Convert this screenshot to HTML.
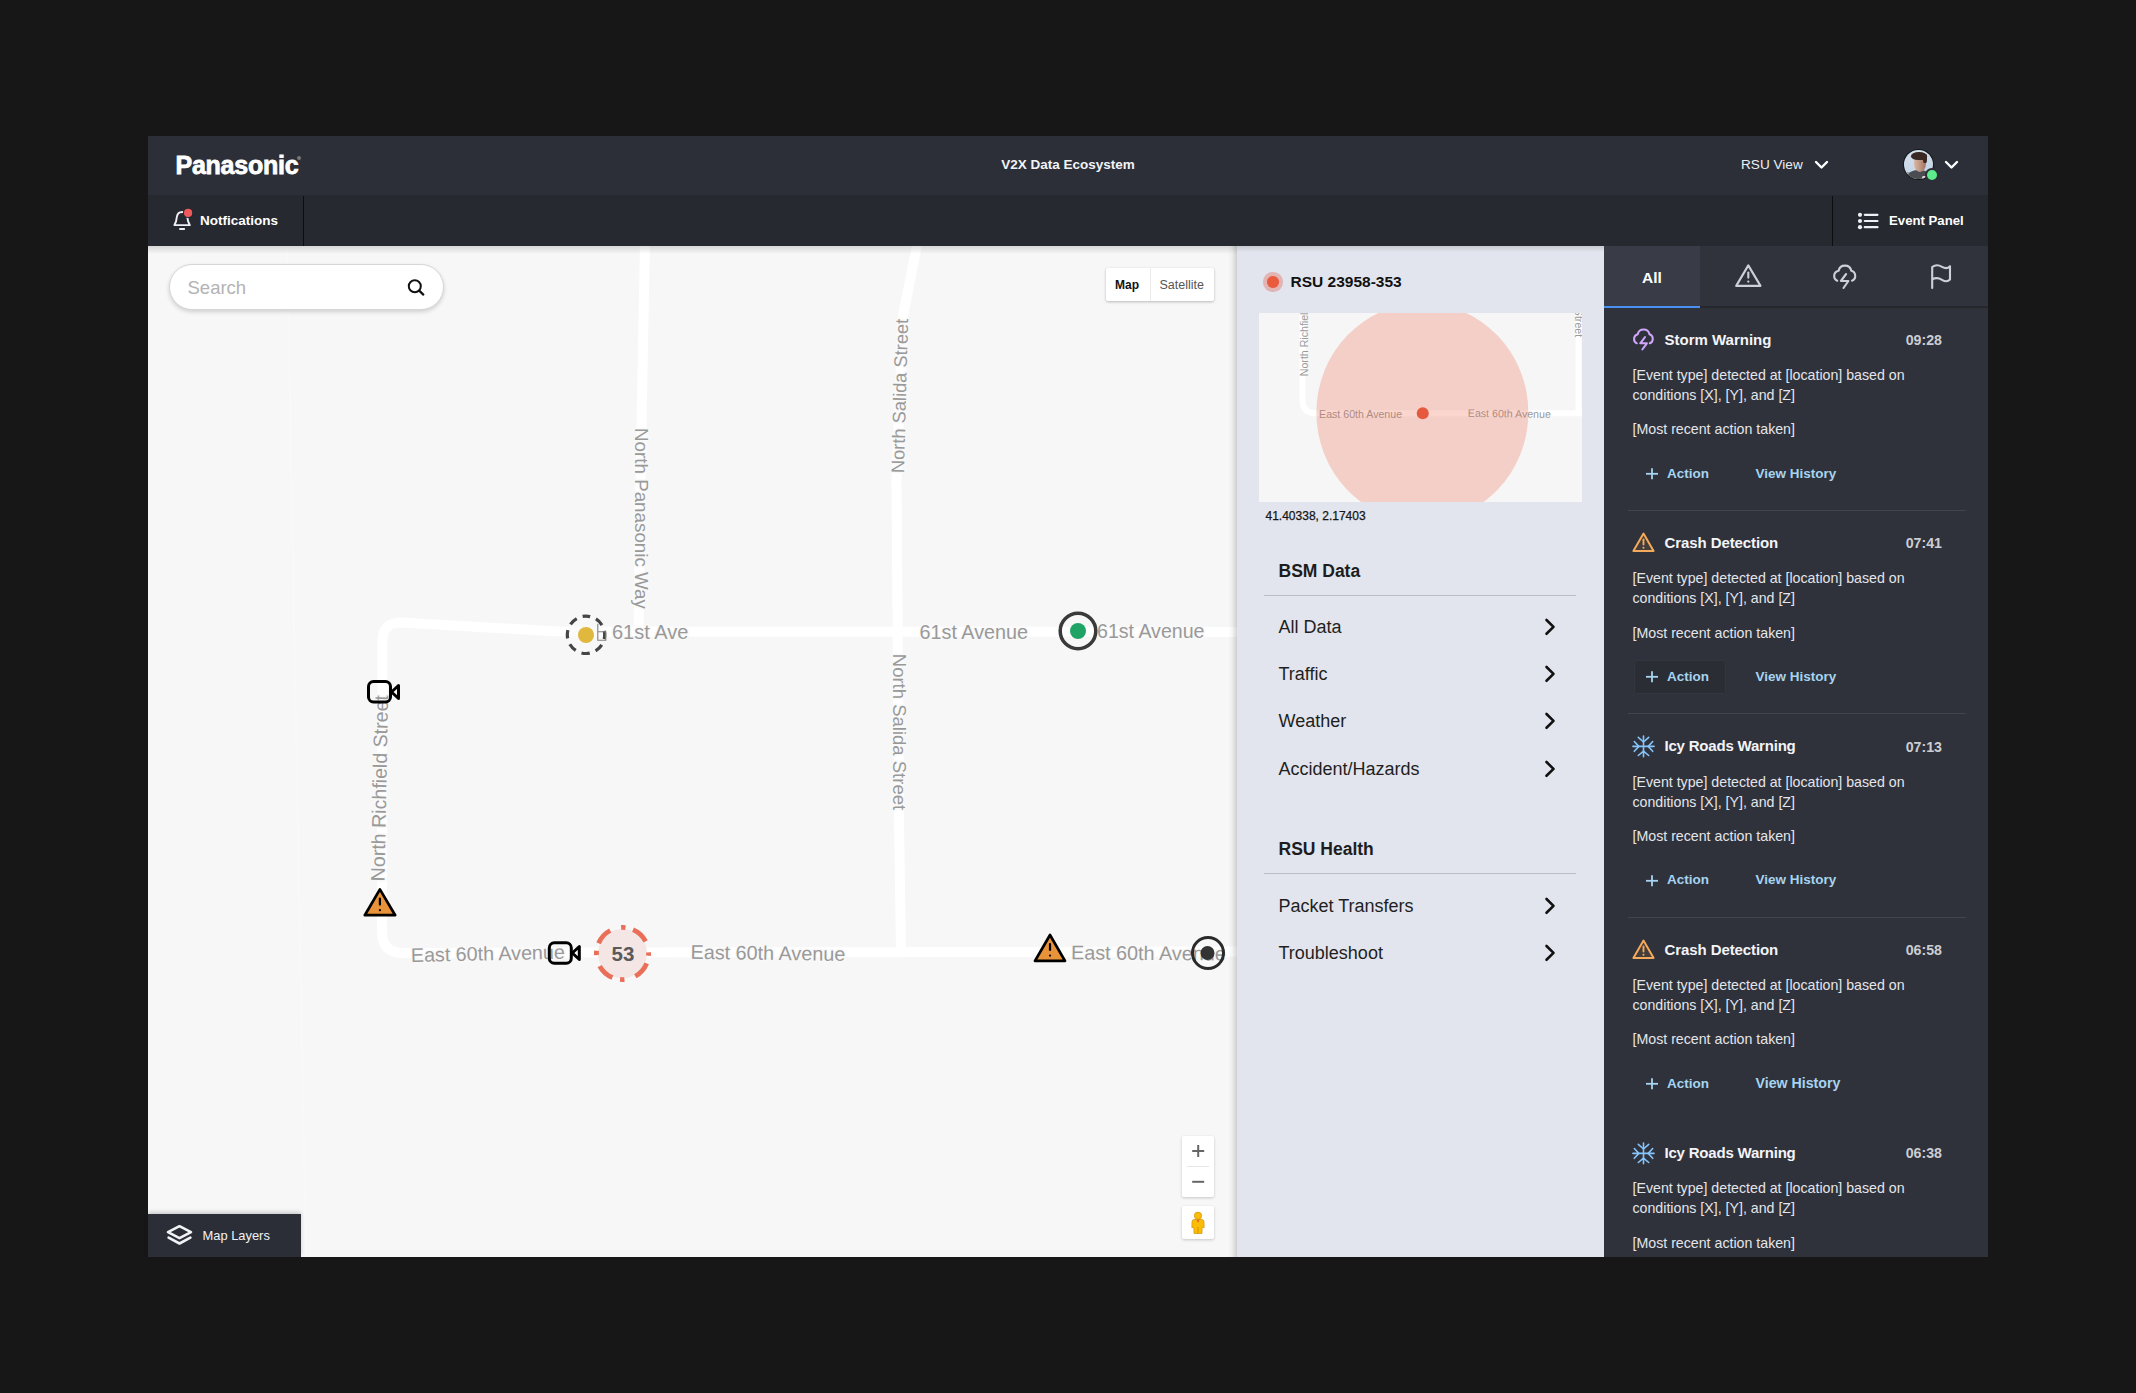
<!DOCTYPE html>
<html><head><meta charset="utf-8">
<style>
*{box-sizing:border-box}
html,body{margin:0;padding:0}
body{width:2136px;height:1393px;background:#171717;position:relative;overflow:hidden;font-family:"Liberation Sans",sans-serif}
.a{position:absolute}
.t{position:absolute;line-height:1;white-space:nowrap}
#h1{left:148px;top:136px;width:1840px;height:59px;background:#2c2f37}
#h2{left:148px;top:195px;width:1840px;height:51px;background:#262930}
#map{left:148px;top:246px;width:1089px;height:1011px;background:#f7f7f7;overflow:hidden}
#rsu{left:1237px;top:246px;width:367px;height:1011px;background:#e2e5ed}
#ev{left:1604px;top:246px;width:384px;height:1011px;background:#2f323b;overflow:hidden}
</style></head>
<body>
<div id="h1" class="a"></div>
<div id="h2" class="a"></div>
<!-- header 1 -->
<div class="t" style="left:175.5px;top:153px;font-size:25px;font-weight:bold;color:#fff;letter-spacing:-0.25px;-webkit-text-stroke:0.8px #fff">Panasonic</div>
<div class="a" style="left:297px;top:156px;width:4px;height:4px;border-radius:50%;background:#777"></div>
<div class="t" style="left:948px;width:240px;text-align:center;top:158px;font-size:13.5px;font-weight:bold;color:#f2f3f7">V2X Data Ecosystem</div>
<div class="t" style="left:1741px;top:157.8px;font-size:13.6px;color:#eceef2">RSU View</div>
<svg class="a" style="left:1812px;top:157px" width="18" height="14"><polyline points="4,5 9.5,10.5 15,5" fill="none" stroke="#fff" stroke-width="2.4" stroke-linecap="round" stroke-linejoin="round"/></svg>
<div class="a" style="left:1903.3px;top:149px;width:31.2px;height:31.2px;border-radius:50%;background:#15171a"></div>
<div class="a" style="left:1904.3px;top:150px;width:29.2px;height:29.2px;border-radius:50%;overflow:hidden;background:linear-gradient(160deg,#d6e2ee,#bfd0e2)">
  <div class="a" style="left:-3px;top:22px;width:15px;height:10px;border-radius:40% 40% 0 0;background:#9aa0a8"></div>
  <div class="a" style="left:4px;top:19.5px;width:22px;height:14px;border-radius:45% 45% 0 0;background:#4b4b52"></div>
  <div class="a" style="left:17.5px;top:25.5px;width:6px;height:3.5px;border-radius:2px;background:#e2dcd6"></div>
  <div class="a" style="left:9.5px;top:5px;width:12.5px;height:17px;border-radius:40% 40% 48% 48%;background:linear-gradient(90deg,#d9b8a4,#a47460)"></div>
  <div class="a" style="left:7px;top:1.5px;width:15.5px;height:8.5px;border-radius:50% 50% 30% 45%;background:#3a2922"></div>
  <div class="a" style="left:19px;top:4px;width:3.5px;height:9px;border-radius:40%;background:#3a2922"></div>
</div>
<div class="a" style="left:1925.2px;top:168.2px;width:13.7px;height:13.7px;border-radius:50%;background:#2c2f37"></div>
<div class="a" style="left:1926.7px;top:169.7px;width:10.7px;height:10.7px;border-radius:50%;background:#5ced8a"></div>
<svg class="a" style="left:1942px;top:157px" width="18" height="14"><polyline points="4,5 9.5,10.5 15,5" fill="none" stroke="#fff" stroke-width="2.4" stroke-linecap="round" stroke-linejoin="round"/></svg>
<!-- header 2 -->
<svg class="a" style="left:166px;top:203px" width="32" height="32" viewBox="0 0 32 32">
 <path d="M8.4,22.1 Q10.4,19.2 10.8,14.2 C11.2,10.9 13.3,9 16.2,9 C19,9 21,10.9 21.3,14.2 Q21.8,19.2 23.8,22.1 Z" fill="none" stroke="#eef0f5" stroke-width="1.9" stroke-linejoin="round"/>
 <line x1="14" y1="26" x2="18.2" y2="26" stroke="#eef0f5" stroke-width="1.9" stroke-linecap="round"/>
 <circle cx="22.1" cy="9.9" r="5.2" fill="#262930"/>
 <circle cx="22.1" cy="9.9" r="4.1" fill="#ee5a5a"/>
</svg>
<div class="t" style="left:200px;top:213.8px;font-size:13.5px;font-weight:bold;color:#fff">Notfications</div>
<div class="a" style="left:302.5px;top:196px;width:1.5px;height:50px;background:#0e0e10"></div>
<div class="a" style="left:1831.5px;top:196px;width:1.5px;height:50px;background:#0e0e10"></div>
<svg class="a" style="left:1856px;top:211px" width="24" height="20" viewBox="0 0 24 20">
 <circle cx="4" cy="3.8" r="2.1" fill="#eef0f4"/><circle cx="4" cy="10" r="2.1" fill="#eef0f4"/><circle cx="4" cy="16.2" r="2.1" fill="#eef0f4"/>
 <line x1="8.8" y1="3.8" x2="21.5" y2="3.8" stroke="#eef0f4" stroke-width="2.2" stroke-linecap="round"/>
 <line x1="8.8" y1="10" x2="21.5" y2="10" stroke="#eef0f4" stroke-width="2.2" stroke-linecap="round"/>
 <line x1="8.8" y1="16.2" x2="21.5" y2="16.2" stroke="#eef0f4" stroke-width="2.2" stroke-linecap="round"/>
</svg>
<div class="t" style="left:1889px;top:214.2px;font-size:13.2px;font-weight:bold;color:#fff">Event Panel</div>
<div id="map" class="a">
<svg class="a" style="left:0;top:0" width="1089" height="1011" viewBox="148 246 1089 1011">
 <line x1="287" y1="246" x2="306" y2="1257" stroke="#f9f9f9" stroke-width="1.6"/>
 <g fill="none" stroke="#ffffff" stroke-width="10" stroke-linejoin="round">
  <path d="M645,240 L641.6,420 L638.5,632"/>
  <path d="M918,240 L903,316 L896.5,480 L899,820 L901,952"/>
  <path d="M382.5,700 L382.5,641 Q382.5,622.5 401,622.5 L560,631.5 L1240,632"/>
  <path d="M382,700 L382,932 Q382,952.5 402,953 L1240,951.5"/>
 </g>
 <g font-family="Liberation Sans" fill="#999999" stroke="#f9f9f9" stroke-width="3" paint-order="stroke" stroke-linejoin="round">
  <text x="612" y="638.7" font-size="20">61st Ave</text>
  <text x="919.5" y="639" font-size="19.8">61st Avenue</text>
  <text x="1097" y="638.2" font-size="19.6">61st Avenue</text>
  <text transform="translate(411,962) rotate(-1.2)" font-size="19.7">East 60th Avenue</text>
  <text transform="translate(690.5,958.8) rotate(0.8)" font-size="19.8">East 60th Avenue</text>
  <text transform="translate(1071,959.3) rotate(0.5)" font-size="19.8">East 60th Avenue</text>
  <text transform="translate(635,428) rotate(90)" font-size="18.8">North Panasonic Way</text>
  <text transform="translate(904,473.3) rotate(-88.5)" font-size="18.3">North Salida Street</text>
  <text transform="translate(893,653.8) rotate(90)" font-size="18.5">North Salida Street</text>
  <text transform="translate(384.5,881.4) rotate(-88.9)" font-size="19.6">North Richfield Street</text>
 </g>
 <!-- yellow marker -->
 <circle cx="586" cy="634.8" r="18.7" fill="#f9f9f9" fill-opacity="0.6" stroke="#454545" stroke-width="3.2" stroke-dasharray="8.5 6.19" stroke-dashoffset="4.25" transform="rotate(-90 586 634.8)"/>
 <circle cx="586" cy="635" r="8" fill="#e0b83e"/>
 <path d="M597.8,623.8 L597.8,640.2 L605.8,640.2 L605.8,631.8 L597.8,631.8" fill="none" stroke="#808080" stroke-width="1.1"/>

 <!-- green marker -->
 <circle cx="1078" cy="631" r="17.8" fill="none" stroke="#3a3a3a" stroke-width="3.5"/>
 <circle cx="1078" cy="631" r="8" fill="#20a465"/>
 <!-- dark marker -->
 <circle cx="1208" cy="953" r="15.5" fill="none" stroke="#2a2a2a" stroke-width="3"/>
 <circle cx="1207.5" cy="953" r="7" fill="#333"/>
 <!-- 53 marker -->
 <circle cx="622.5" cy="953.5" r="24.5" fill="#f3e6e4"/>
 <circle cx="622.5" cy="953.5" r="26.1" fill="none" stroke="#ea6f58" stroke-width="4.8" stroke-dasharray="4.55 7.75 17.35 11.35" stroke-dashoffset="2.27"/>
 <text x="623" y="961.2" font-family="Liberation Sans" font-weight="bold" font-size="20.5" fill="#5a5a5a" text-anchor="middle">53</text>
 <!-- cameras -->
 <g fill="none" stroke="#000" stroke-width="3" stroke-linejoin="round">
  <rect x="368.5" y="681.5" width="22" height="20.4" rx="5"/>
  <path d="M391.5,692 L398.5,685.5 L398.5,698.5 Z"/>
  <rect x="549.3" y="942.8" width="22" height="20.4" rx="5"/>
  <path d="M572.3,953 L579.3,946.5 L579.3,959.5 Z"/>
 </g>
 <!-- warnings -->
 <g stroke="#000" stroke-width="2.7" stroke-linejoin="round">
  <path d="M379.9,889.4 L395.2,915.2 L364.8,915.2 Z" fill="#e8923a"/>
  <line x1="379.9" y1="898.6" x2="379.9" y2="904.6" stroke-width="2.2" stroke-linecap="round"/>
  <circle cx="379.9" cy="910.2" r="1.1" stroke-width="0" fill="#000"/>
  <path d="M1050,935 L1065,960.9 L1035,960.9 Z" fill="#e8923a"/>
  <line x1="1050" y1="944" x2="1050" y2="950" stroke-width="2.2" stroke-linecap="round"/>
  <circle cx="1050" cy="955.6" r="1.1" stroke-width="0" fill="#000"/>
 </g>
</svg>
<div class="a" style="left:0;top:0;width:1089px;height:8px;background:linear-gradient(rgba(0,0,0,0.13),rgba(0,0,0,0))"></div>
</div>

<!-- map controls -->
<div class="a" style="left:168.5px;top:264px;width:275px;height:45.5px;border-radius:23px;background:#fff;border:1px solid #d6d6d6;box-shadow:0 2px 4px rgba(0,0,0,0.16)"></div>
<div class="t" style="left:187.5px;top:279px;font-size:18.5px;color:#b3b3b3">Search</div>
<svg class="a" style="left:404px;top:276px" width="24" height="22" viewBox="0 0 24 22"><circle cx="10.8" cy="10.2" r="6" fill="none" stroke="#111" stroke-width="2"/><line x1="15.2" y1="14.6" x2="19.3" y2="18.6" stroke="#111" stroke-width="2.2" stroke-linecap="round"/></svg>
<div class="a" style="left:1106px;top:268px;width:108px;height:32.5px;border-radius:2px;background:#fff;box-shadow:0 1px 3px rgba(0,0,0,0.25)"></div>
<div class="a" style="left:1150px;top:268px;width:1px;height:32.5px;background:#ebebeb"></div>
<div class="t" style="left:1115px;top:278.5px;font-size:12px;font-weight:bold;color:#111">Map</div>
<div class="t" style="left:1159.5px;top:278.5px;font-size:12.5px;color:#565656">Satellite</div>
<div class="a" style="left:1182px;top:1136px;width:32px;height:61px;border-radius:2px;background:#fff;box-shadow:0 1px 3px rgba(0,0,0,0.2)"></div>
<div class="a" style="left:1187px;top:1166px;width:22px;height:1px;background:#e6e6e6"></div>
<svg class="a" style="left:1182px;top:1136px" width="32" height="61"><g stroke="#666" stroke-width="2"><line x1="10.2" y1="15" x2="22.2" y2="15"/><line x1="16.2" y1="9" x2="16.2" y2="21"/><line x1="10.2" y1="45.8" x2="22.2" y2="45.8"/></g></svg>
<div class="a" style="left:1182px;top:1206px;width:32px;height:32.5px;border-radius:2px;background:#fff;box-shadow:0 1px 3px rgba(0,0,0,0.2)"></div>
<svg class="a" style="left:1182px;top:1206px" width="32" height="33" viewBox="0 0 32 33">
 <circle cx="16" cy="9.8" r="3.7" fill="#fbbc05" stroke="#c88a00" stroke-width="0.6"/>
 <path d="M12,13.5 L20,13.5 Q21.8,13.5 22,15.5 L22.2,21.5 L20.2,21.5 L20,27.5 L12,27.5 L11.8,21.5 L9.8,21.5 L10,15.5 Q10.2,13.5 12,13.5 Z" fill="#fbbc05" stroke="#c88a00" stroke-width="0.6"/>
 <path d="M14.5,13.8 L16,17 L17.5,13.8 Z" fill="#e8642c"/>
 <line x1="16" y1="21" x2="16" y2="27.5" stroke="#c88a00" stroke-width="0.8"/>
</svg>
<div class="a" style="left:148px;top:1214px;width:153px;height:43px;background:#2b2e36;box-shadow:0 -2px 4px rgba(0,0,0,0.18)"></div>
<svg class="a" style="left:164px;top:1222px" width="32" height="27" viewBox="0 0 32 27">
 <path d="M15.5,4.2 L27,10.2 L15.5,16.2 L4,10.2 Z" fill="none" stroke="#f1f2f6" stroke-width="2.6" stroke-linejoin="round"/>
 <path d="M4.6,15.6 L15.5,21.5 L26.4,15.6" fill="none" stroke="#f1f2f6" stroke-width="2.6" stroke-linejoin="round" stroke-linecap="round"/>
</svg>
<div class="t" style="left:202.5px;top:1230px;font-size:12.9px;color:#f1f2f6">Map Layers</div>
<div id="rsu" class="a"></div>
<div class="a" style="left:1228px;top:246px;width:9px;height:1011px;background:linear-gradient(90deg,rgba(0,0,0,0),rgba(0,0,0,0.04) 45%,rgba(0,0,0,0.17))"></div>
<div class="a" style="left:1237px;top:246px;width:367px;height:6px;background:linear-gradient(rgba(0,0,0,0.12),rgba(0,0,0,0))"></div>
<div class="a" style="left:1263px;top:272px;width:19.5px;height:19.5px;border-radius:50%;background:rgba(226,120,110,0.45)"></div>
<div class="a" style="left:1267px;top:276px;width:11.5px;height:11.5px;border-radius:50%;background:#ea5a3d"></div>
<div class="t" style="left:1290.5px;top:274px;font-size:15.5px;font-weight:bold;color:#111">RSU 23958-353</div>
<div class="a" style="left:1258.5px;top:313px;width:323.5px;height:188.5px;background:#f6f6f6;overflow:hidden">
 <svg class="a" style="left:0;top:0" width="324" height="189" viewBox="1258.5 313 323.5 188.5">
  <g fill="none" stroke="#fff" stroke-width="6" stroke-linejoin="round">
   <path d="M1302,300 L1302,400 Q1302,413 1315,413 L1590,413"/>
   <path d="M1577.5,300 L1577.5,413"/>
  </g>
  <g font-family="Liberation Sans" fill="#9a9a9a" font-size="10.6">
   <text transform="translate(1307,376) rotate(-90)">North Richfield</text>
   <text transform="translate(1574,337) rotate(90)" text-anchor="end">Street</text>
   <text x="1318.5" y="418">East 60th Avenue</text>
   <text transform="translate(1467,416.5) rotate(0.8)">East 60th Avenue</text>
  </g>
  <ellipse cx="1421.6" cy="412.4" rx="105.8" ry="109.3" fill="rgb(234,90,61)" fill-opacity="0.25"/>
  <circle cx="1422" cy="413" r="6" fill="#e55a3f"/>
 </svg>
</div>
<div class="t" style="left:1265.5px;top:509.8px;font-size:12px;color:#151515;-webkit-text-stroke:0.25px #151515">41.40338, 2.17403</div>
<div class="t" style="left:1278.5px;top:562.5px;font-size:17.5px;font-weight:bold;color:#1d1d20">BSM Data</div>
<div class="a" style="left:1264px;top:594.5px;width:312px;height:1px;background:#b9bdc7"></div>
<div class="t" style="left:1278.5px;top:840.8px;font-size:17.5px;font-weight:bold;color:#1d1d20">RSU Health</div>
<div class="a" style="left:1264px;top:873px;width:312px;height:1px;background:#b9bdc7"></div>
<div class="t" style="left:1278.5px;top:617.9px;font-size:18px;color:#1f1f22">All Data</div>
<svg class="a" style="left:1542px;top:617.9px" width="16" height="18"><polyline points="4.5,2 11.5,8.9 4.5,15.8" fill="none" stroke="#111" stroke-width="2.6" stroke-linecap="round" stroke-linejoin="round"/></svg>
<div class="t" style="left:1278.5px;top:665.1px;font-size:18px;color:#1f1f22">Traffic</div>
<svg class="a" style="left:1542px;top:665.1px" width="16" height="18"><polyline points="4.5,2 11.5,8.9 4.5,15.8" fill="none" stroke="#111" stroke-width="2.6" stroke-linecap="round" stroke-linejoin="round"/></svg>
<div class="t" style="left:1278.5px;top:712.4px;font-size:18px;color:#1f1f22">Weather</div>
<svg class="a" style="left:1542px;top:712.4px" width="16" height="18"><polyline points="4.5,2 11.5,8.9 4.5,15.8" fill="none" stroke="#111" stroke-width="2.6" stroke-linecap="round" stroke-linejoin="round"/></svg>
<div class="t" style="left:1278.5px;top:760.4px;font-size:18px;color:#1f1f22">Accident/Hazards</div>
<svg class="a" style="left:1542px;top:760.4px" width="16" height="18"><polyline points="4.5,2 11.5,8.9 4.5,15.8" fill="none" stroke="#111" stroke-width="2.6" stroke-linecap="round" stroke-linejoin="round"/></svg>
<div class="t" style="left:1278.5px;top:896.6px;font-size:18px;color:#1f1f22">Packet Transfers</div>
<svg class="a" style="left:1542px;top:896.6px" width="16" height="18"><polyline points="4.5,2 11.5,8.9 4.5,15.8" fill="none" stroke="#111" stroke-width="2.6" stroke-linecap="round" stroke-linejoin="round"/></svg>
<div class="t" style="left:1278.5px;top:943.7px;font-size:18px;color:#1f1f22">Troubleshoot</div>
<svg class="a" style="left:1542px;top:943.7px" width="16" height="18"><polyline points="4.5,2 11.5,8.9 4.5,15.8" fill="none" stroke="#111" stroke-width="2.6" stroke-linecap="round" stroke-linejoin="round"/></svg>

<div id="ev" class="a">
<div class="a" style="left:0;top:0;width:384px;height:62px;background:#30333c"></div>
<div class="a" style="left:0;top:0;width:96px;height:60px;background:#393c47"></div>
<div class="a" style="left:0;top:60px;width:384px;height:2px;background:#25272d"></div>
<div class="a" style="left:0;top:60px;width:96px;height:2px;background:#4a8ff2"></div>
</div>
<div class="t" style="left:1633px;width:38px;text-align:center;top:269.7px;font-size:15.5px;font-weight:bold;color:#fff">All</div>
<svg class="a" style="left:1730px;top:255px" width="36" height="36" viewBox="0 0 36 36"><path d="M18.3,10.4 L30.5,30.9 L6.2,30.9 Z" fill="none" stroke="#cdd0d8" stroke-width="2.1" stroke-linejoin="round"/><line x1="18.3" y1="17.6" x2="18.3" y2="22.6" stroke="#cdd0d8" stroke-width="2.1" stroke-linecap="round"/><circle cx="18.3" cy="26.6" r="1.15" fill="#cdd0d8"/></svg>
<svg class="a" style="left:1828px;top:258px" width="36" height="36" viewBox="0 0 36 36"><path d="M9.2,22.7 A5.3,5.3 0 0 1 10.6,12.7 A6.5,6.5 0 0 1 23.3,12.7 A5.3,5.3 0 0 1 24,22.7" fill="none" stroke="#cdd0d8" stroke-width="2.1" stroke-linecap="round" stroke-linejoin="round"/><path d="M18.1,16 L12.9,23 L20.4,23 L15.5,30" fill="none" stroke="#cdd0d8" stroke-width="2.1" stroke-linecap="round" stroke-linejoin="round"/></svg>
<svg class="a" style="left:1922px;top:258px" width="36" height="36" viewBox="0 0 36 36"><path d="M10.2,30 L10.2,9 C13,6.8 17,7 20,8.8 C23,10.6 26,10.4 28,8.2 L28,21.6 C26,23.6 23,23.6 20,21.8 C17,20 13,19.8 10.2,21.4" fill="none" stroke="#cdd0d8" stroke-width="2.1" stroke-linecap="round" stroke-linejoin="round"/></svg>
<svg class="a" style="left:1628px;top:324.0px" width="32" height="32" viewBox="0 0 32 32"><path d="M8.8,19.3 A4.8,4.8 0 0 1 9.7,10.3 A6,6 0 0 1 21.5,10.3 A4.8,4.8 0 0 1 21.8,19.3" fill="none" stroke="#d0a6fb" stroke-width="2" stroke-linecap="round" stroke-linejoin="round"/><path d="M17,13.1 L12.2,19.3 L18.9,19.3 L14.3,25.5" fill="none" stroke="#d0a6fb" stroke-width="2" stroke-linecap="round" stroke-linejoin="round"/></svg>
<div class="t" style="left:1664.5px;top:331.6px;font-size:15px;letter-spacing:0px;font-weight:bold;color:#f3f4f8">Storm Warning</div>
<div class="t" style="left:1842px;width:100px;text-align:right;top:333.0px;font-size:14.2px;font-weight:bold;color:#cbcdd2">09:28</div>
<div class="t" style="left:1632.5px;top:365.1px;font-size:14.2px;color:#e4e5ea;line-height:20px;white-space:normal;width:300px">[Event type] detected at [location] based on conditions [X], [Y], and [Z]</div>
<div class="t" style="left:1632.5px;top:422.4px;font-size:14.2px;color:#e4e5ea">[Most recent action taken]</div>
<svg class="a" style="left:1644px;top:466.0px" width="16" height="16"><g stroke="#a6d4f0" stroke-width="1.8"><line x1="2" y1="7.8" x2="14" y2="7.8"/><line x1="8" y1="2.3" x2="8" y2="13.3"/></g></svg>
<div class="t" style="left:1667px;top:466.8px;font-size:13.5px;font-weight:bold;color:#a6d4f0">Action</div>
<div class="t" style="left:1755.5px;top:466.8px;font-size:13.5px;font-weight:bold;color:#a6d4f0">View History</div>
<div class="a" style="left:1628px;top:510.0px;width:337.5px;height:1.2px;background:#41444d"></div>
<svg class="a" style="left:1628px;top:526.0px" width="32" height="32" viewBox="0 0 32 32"><path d="M15.5,7.6 L25.6,24.9 L5.4,24.9 Z" fill="#433d3b" stroke="#f5a95a" stroke-width="2" stroke-linejoin="round"/><line x1="15.5" y1="13.4" x2="15.5" y2="18.6" stroke="#f5a95a" stroke-width="1.9" stroke-linecap="round"/><circle cx="15.5" cy="21.8" r="1.05" fill="#f5a95a"/></svg>
<div class="t" style="left:1664.5px;top:534.9px;font-size:15px;letter-spacing:-0.09px;font-weight:bold;color:#f3f4f8">Crash Detection</div>
<div class="t" style="left:1842px;width:100px;text-align:right;top:536.3px;font-size:14.2px;font-weight:bold;color:#cbcdd2">07:41</div>
<div class="t" style="left:1632.5px;top:568.4px;font-size:14.2px;color:#e4e5ea;line-height:20px;white-space:normal;width:300px">[Event type] detected at [location] based on conditions [X], [Y], and [Z]</div>
<div class="t" style="left:1632.5px;top:625.7px;font-size:14.2px;color:#e4e5ea">[Most recent action taken]</div>
<div class="a" style="left:1633.5px;top:659.8px;width:92.5px;height:34px;border-radius:3px;background:#2b2d34;border:1px solid #33363e"></div>
<svg class="a" style="left:1644px;top:669.3px" width="16" height="16"><g stroke="#a6d4f0" stroke-width="1.8"><line x1="2" y1="7.8" x2="14" y2="7.8"/><line x1="8" y1="2.3" x2="8" y2="13.3"/></g></svg>
<div class="t" style="left:1667px;top:670.1px;font-size:13.5px;font-weight:bold;color:#a6d4f0">Action</div>
<div class="t" style="left:1755.5px;top:670.1px;font-size:13.5px;font-weight:bold;color:#a6d4f0">View History</div>
<div class="a" style="left:1628px;top:713.3px;width:337.5px;height:1.2px;background:#41444d"></div>
<svg class="a" style="left:1628px;top:730.0px" width="32" height="32" viewBox="0 0 32 32"><g stroke="#86c4fb" stroke-width="1.6" stroke-linecap="round" stroke-linejoin="round" fill="none"><line x1="15.5" y1="6.1" x2="15.5" y2="26.7"/><line x1="4.9" y1="16.4" x2="26" y2="16.4"/><polyline points="10.3,7.4 15.5,12 20.7,7.4"/><polyline points="10.3,25.5 15.5,21.1 20.7,25.5"/><polyline points="6.3,11.5 10.8,16.4 6.3,21.3"/><polyline points="24.7,11.5 20.2,16.4 24.7,21.3"/></g></svg>
<div class="t" style="left:1664.5px;top:738.2px;font-size:15px;letter-spacing:-0.2px;font-weight:bold;color:#f3f4f8">Icy Roads Warning</div>
<div class="t" style="left:1842px;width:100px;text-align:right;top:739.6px;font-size:14.2px;font-weight:bold;color:#cbcdd2">07:13</div>
<div class="t" style="left:1632.5px;top:771.7px;font-size:14.2px;color:#e4e5ea;line-height:20px;white-space:normal;width:300px">[Event type] detected at [location] based on conditions [X], [Y], and [Z]</div>
<div class="t" style="left:1632.5px;top:829.0px;font-size:14.2px;color:#e4e5ea">[Most recent action taken]</div>
<svg class="a" style="left:1644px;top:872.6px" width="16" height="16"><g stroke="#a6d4f0" stroke-width="1.8"><line x1="2" y1="7.8" x2="14" y2="7.8"/><line x1="8" y1="2.3" x2="8" y2="13.3"/></g></svg>
<div class="t" style="left:1667px;top:873.4px;font-size:13.5px;font-weight:bold;color:#a6d4f0">Action</div>
<div class="t" style="left:1755.5px;top:873.4px;font-size:13.5px;font-weight:bold;color:#a6d4f0">View History</div>
<div class="a" style="left:1628px;top:916.6px;width:337.5px;height:1.2px;background:#41444d"></div>
<svg class="a" style="left:1628px;top:932.6px" width="32" height="32" viewBox="0 0 32 32"><path d="M15.5,7.6 L25.6,24.9 L5.4,24.9 Z" fill="#433d3b" stroke="#f5a95a" stroke-width="2" stroke-linejoin="round"/><line x1="15.5" y1="13.4" x2="15.5" y2="18.6" stroke="#f5a95a" stroke-width="1.9" stroke-linecap="round"/><circle cx="15.5" cy="21.8" r="1.05" fill="#f5a95a"/></svg>
<div class="t" style="left:1664.5px;top:941.5px;font-size:15px;letter-spacing:-0.09px;font-weight:bold;color:#f3f4f8">Crash Detection</div>
<div class="t" style="left:1842px;width:100px;text-align:right;top:942.9px;font-size:14.2px;font-weight:bold;color:#cbcdd2">06:58</div>
<div class="t" style="left:1632.5px;top:975.0px;font-size:14.2px;color:#e4e5ea;line-height:20px;white-space:normal;width:300px">[Event type] detected at [location] based on conditions [X], [Y], and [Z]</div>
<div class="t" style="left:1632.5px;top:1032.3px;font-size:14.2px;color:#e4e5ea">[Most recent action taken]</div>
<svg class="a" style="left:1644px;top:1075.9px" width="16" height="16"><g stroke="#a6d4f0" stroke-width="1.8"><line x1="2" y1="7.8" x2="14" y2="7.8"/><line x1="8" y1="2.3" x2="8" y2="13.3"/></g></svg>
<div class="t" style="left:1667px;top:1076.7px;font-size:13.5px;font-weight:bold;color:#a6d4f0">Action</div>
<div class="t" style="left:1755.5px;top:1076.1px;font-size:14.2px;font-weight:bold;color:#a6d4f0">View History</div>
<svg class="a" style="left:1628px;top:1136.6px" width="32" height="32" viewBox="0 0 32 32"><g stroke="#86c4fb" stroke-width="1.6" stroke-linecap="round" stroke-linejoin="round" fill="none"><line x1="15.5" y1="6.1" x2="15.5" y2="26.7"/><line x1="4.9" y1="16.4" x2="26" y2="16.4"/><polyline points="10.3,7.4 15.5,12 20.7,7.4"/><polyline points="10.3,25.5 15.5,21.1 20.7,25.5"/><polyline points="6.3,11.5 10.8,16.4 6.3,21.3"/><polyline points="24.7,11.5 20.2,16.4 24.7,21.3"/></g></svg>
<div class="t" style="left:1664.5px;top:1144.8px;font-size:15px;letter-spacing:-0.2px;font-weight:bold;color:#f3f4f8">Icy Roads Warning</div>
<div class="t" style="left:1842px;width:100px;text-align:right;top:1146.2px;font-size:14.2px;font-weight:bold;color:#cbcdd2">06:38</div>
<div class="t" style="left:1632.5px;top:1178.3px;font-size:14.2px;color:#e4e5ea;line-height:20px;white-space:normal;width:300px">[Event type] detected at [location] based on conditions [X], [Y], and [Z]</div>
<div class="t" style="left:1632.5px;top:1235.6px;font-size:14.2px;color:#e4e5ea">[Most recent action taken]</div>
</body></html>
